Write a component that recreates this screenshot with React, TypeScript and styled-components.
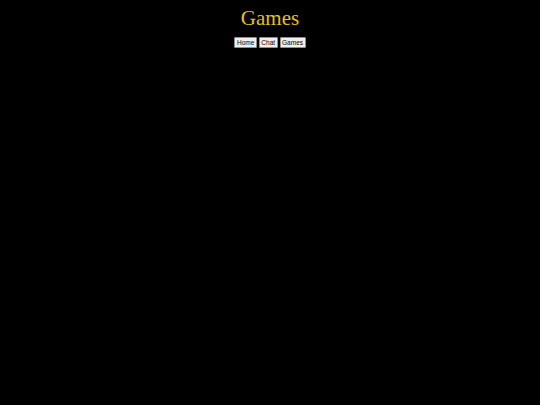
import React from 'react';
import styled, { createGlobalStyle } from 'styled-components';

const GlobalStyle = createGlobalStyle`
  html, body {
    margin: 0;
    background: #000;
  }
`;

const Page = styled.div`
  display: flex;
  flex-direction: column;
  align-items: center;
  min-height: 405px;
  background: #000;
`;

const Title = styled.h1`
  margin: 5px 0 0;
  font-family: "Liberation Serif", serif;
  font-weight: normal;
  font-size: 21px;
  line-height: 26px;
  color: #e3c21f;
`;

const Nav = styled.nav`
  display: flex;
  gap: 2px;
  margin-top: 6px;
`;

const NavButton = styled.button`
  font-family: "Liberation Sans", Arial, sans-serif;
  font-size: 6.5px;
  line-height: 7px;
  padding: 1px 1.5px;
  background: #efefef;
  color: #000;
  border: 1px solid #8f8f8f;
  border-radius: 1px;
`;

const App: React.FC = () => {
  return (
    <>
      <GlobalStyle />
      <Page>
        <Title>Games</Title>
        <Nav>
          <NavButton>Home</NavButton>
          <NavButton>Chat</NavButton>
          <NavButton>Games</NavButton>
        </Nav>
      </Page>
    </>
  );
};

export default App;
